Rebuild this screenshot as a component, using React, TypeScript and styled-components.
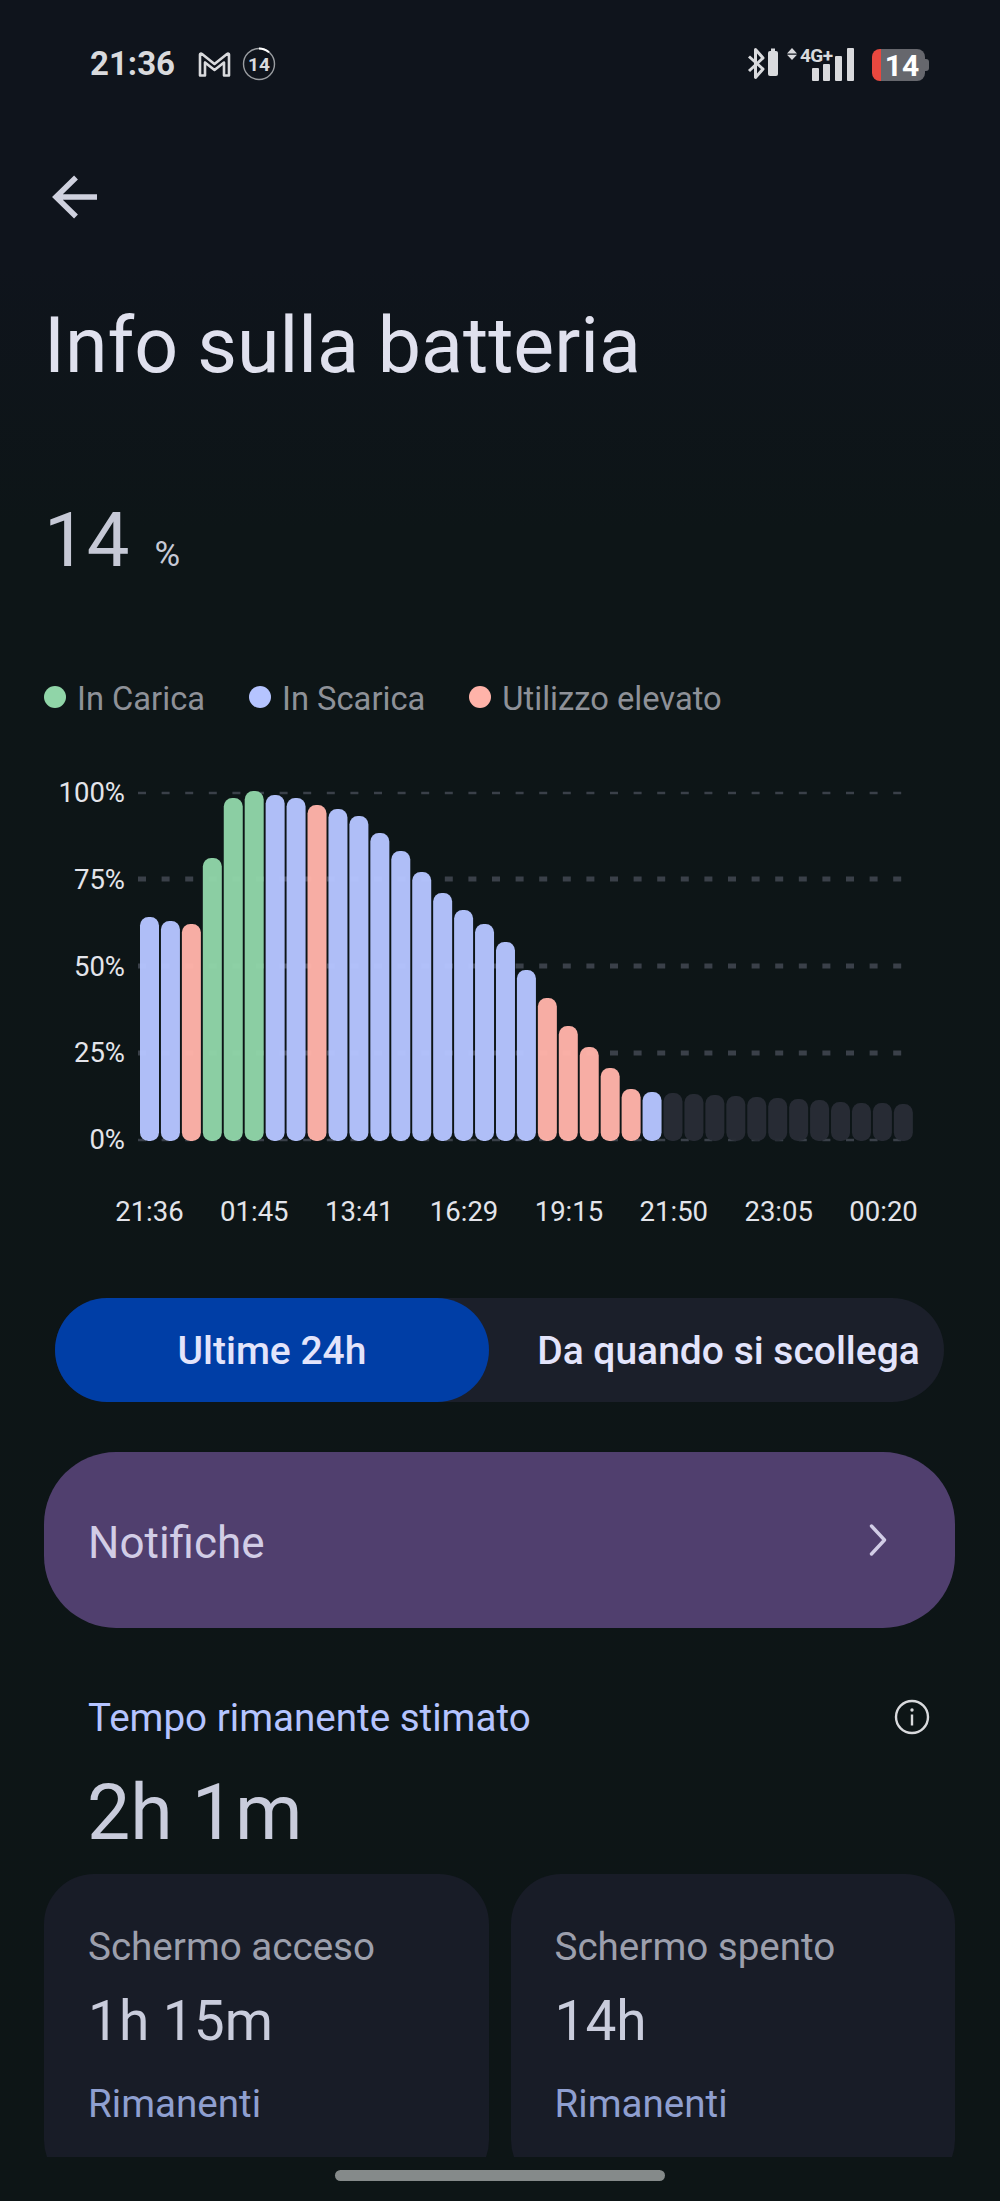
import React from 'react';
import styled, { createGlobalStyle } from 'styled-components';

const GlobalStyle = createGlobalStyle`
  html, body {
    margin: 0;
    padding: 0;
    background: #0d1516;
  }
  * {
    box-sizing: border-box;
  }
`;

const BLUE = '#b5c4ff';
const GREEN = '#90d5a8';
const SALMON = '#ffb3a9';
const IDLE = '#282c36';

const CHART_TOP = 778;
const CHART_LEFT = 130;
const BASELINE = 1141;

type Bar = { top: number; color: string };

const bars: Bar[] = [
  { top: 917, color: BLUE },
  { top: 921, color: BLUE },
  { top: 924, color: SALMON },
  { top: 858, color: GREEN },
  { top: 798, color: GREEN },
  { top: 791, color: GREEN },
  { top: 795, color: BLUE },
  { top: 798, color: BLUE },
  { top: 805, color: SALMON },
  { top: 809, color: BLUE },
  { top: 816, color: BLUE },
  { top: 833, color: BLUE },
  { top: 851, color: BLUE },
  { top: 872, color: BLUE },
  { top: 893, color: BLUE },
  { top: 910, color: BLUE },
  { top: 924, color: BLUE },
  { top: 942, color: BLUE },
  { top: 970, color: BLUE },
  { top: 998, color: SALMON },
  { top: 1026, color: SALMON },
  { top: 1047, color: SALMON },
  { top: 1068, color: SALMON },
  { top: 1089, color: SALMON },
  { top: 1092, color: BLUE },
  ...[1093, 1094, 1095, 1096, 1097, 1098, 1099, 1100, 1102, 1103, 1103, 1104].map((top) => ({ top, color: IDLE })),
];

const gridLines = [
  { y: 793, h: 2.5 },
  { y: 879, h: 5 },
  { y: 966, h: 5 },
  { y: 1053, h: 5 },
  { y: 1140, h: 2.5 },
];

const Page = styled.div`
  width: 1000px;
  height: 2201px;
  overflow: hidden;
  font-family: Roboto, 'Noto Sans', sans-serif;
  background: linear-gradient(180deg, #0f141c 0%, #0f141c 12%, #0d1517 24%, #0d1516 100%);
`;

const StatusBar = styled.div`
  height: 130px;
  padding: 0 75px 3px 90px;
  display: flex;
  align-items: center;
  color: #d9dadd;
`;

const Clock = styled.span`
  font-size: 33px;
  font-weight: 700;
  width: 108px;
`;

const StatusSpacer = styled.div`
  flex: 1;
`;

const BatteryPill = styled.div`
  position: relative;
  width: 53px;
  height: 32px;
  margin: 3px 0 0 15px;
  border-radius: 8px;
  background: linear-gradient(90deg, #e8483f 0, #e8483f 9px, #66676d 9px);
  display: flex;
  align-items: center;
  justify-content: center;
  padding-left: 7px;
  font-size: 30px;
  font-weight: 700;
  color: #fff;

  &::after {
    content: '';
    position: absolute;
    left: 100%;
    top: 10px;
    width: 4px;
    height: 12px;
    border-radius: 0 3px 3px 0;
    background: #66676d;
  }
`;

const BackRow = styled.div`
  height: 134px;
  padding-left: 52px;
  display: flex;
  align-items: center;
`;

const Title = styled.h1`
  margin: 34px 0 0;
  padding-left: 44px;
  height: 96px;
  font-size: 77px;
  line-height: 96px;
  font-weight: 400;
  color: #e0e1ee;
`;

const LevelRow = styled.div`
  margin-top: 104px;
  padding-left: 44px;
  height: 84px;
  display: flex;
  align-items: baseline;
  color: #c6c9d6;
`;

const LevelValue = styled.span`
  font-size: 76px;
  line-height: 84px;
  font-weight: 400;
`;

const LevelUnit = styled.span`
  margin-left: 25px;
  font-size: 35px;
  font-weight: 400;
`;

const Legend = styled.div`
  margin-top: 97px;
  padding-left: 44px;
  height: 40px;
  display: flex;
  align-items: center;
  gap: 44px;
`;

const LegendItem = styled.div`
  display: flex;
  align-items: center;
  gap: 11px;
  font-size: 32.7px;
  color: #8e9198;
`;

const LegendDot = styled.span<{ $color: string }>`
  width: 22px;
  height: 22px;
  margin-top: -4px;
  border-radius: 50%;
  background: ${(p) => p.$color};
`;

const ChartRow = styled.div`
  margin-top: 59px;
  display: flex;
`;

const YAxis = styled.div`
  width: 125px;
  height: 377px;
  display: flex;
  flex-direction: column;
  justify-content: space-between;
  align-items: flex-end;
  margin-right: 5px;
`;

const AxisLabel = styled.span`
  font-size: 27.5px;
  line-height: 30px;
  color: #e3e4ea;
`;

const XAxis = styled.div`
  margin-top: 40px;
  margin-left: 97px;
  width: 839px;
  display: grid;
  grid-template-columns: repeat(8, 1fr);
  justify-items: center;
`;

const XLabel = styled.span`
  font-size: 27.5px;
  line-height: 34px;
  color: #e3e4ea;
`;

const Toggle = styled.div`
  margin: 69px 0 0 55px;
  width: 889px;
  height: 104px;
  border-radius: 52px;
  background: #1b1f2a;
  display: grid;
  grid-template-columns: 434px 1fr;
  font-size: 39px;
  font-weight: 500;
  color: #e3e4fb;
`;

const ToggleOption = styled.div<{ $active?: boolean }>`
  display: flex;
  align-items: center;
  justify-content: center;
  border-radius: 52px;
  background: ${(p) => (p.$active ? '#003ea6' : 'transparent')};
  padding: ${(p) => (p.$active ? '2px 0 0' : '2px 0 0 24px')};
  white-space: nowrap;
`;

const NotifyCard = styled.div`
  margin: 50px 45px 0 44px;
  height: 176px;
  border-radius: 72px;
  background: #503f6e;
  padding: 0 68px 0 44px;
  display: flex;
  align-items: center;
  justify-content: space-between;
  font-size: 44px;
  color: #d2cde6;
`;

const NotifyLabel = styled.span`
  padding-top: 5px;
`;

const EstimateHead = styled.div`
  margin-top: 69px;
  padding: 0 70px 0 88px;
  height: 40px;
  display: flex;
  align-items: center;
  justify-content: space-between;
  font-size: 38.6px;
  color: ${BLUE};
`;

const EstimateValue = styled.div`
  margin-top: 36px;
  padding-left: 87px;
  height: 80px;
  font-size: 77px;
  line-height: 80px;
  font-weight: 400;
  color: #c9ccdc;
`;

const CardsClip = styled.div`
  margin: 21px 45px 0 44px;
  height: 283px;
  overflow: hidden;
  display: grid;
  grid-template-columns: 1fr 1fr;
  gap: 22px;
`;

const StatCard = styled.div`
  height: 316px;
  border-radius: 50px;
  background: #181c27;
  padding: 52px 44px 0;
`;

const StatLabel = styled.div`
  font-size: 38.6px;
  line-height: 42px;
  color: #9c9fac;
`;

const StatValue = styled.div`
  margin-top: 20px;
  font-size: 55px;
  line-height: 66px;
  font-weight: 400;
  color: #c9ccdc;
`;

const StatNote = styled.div`
  margin-top: 29px;
  font-size: 38.6px;
  line-height: 42px;
  color: #8f9fd0;
`;

const HomeBar = styled.div`
  margin: 13px auto 0;
  width: 330px;
  height: 11px;
  border-radius: 6px;
  background: #858a8a;
`;

const GmailIcon = () => (
  <svg width="33" height="26" viewBox="0 0 33 26" fill="none">
    <path
      d="M2 24.5V3.5C2 2.6 3 2.2 3.7 2.8L16.5 13L29.3 2.8C30 2.2 31 2.6 31 3.5V24.5H26V11.5L16.5 19L7 11.5V24.5Z"
      stroke="#d9dadd"
      strokeWidth="2.6"
      strokeLinejoin="round"
    />
  </svg>
);

const BadgeIcon = () => (
  <svg width="34" height="34" viewBox="0 0 34 34" style={{ marginLeft: 11 }}>
    <circle cx="17" cy="17" r="15.5" fill="none" stroke="#9a9da1" strokeWidth="1.4" />
    <path d="M17 1.5A15.5 15.5 0 0 1 27 5.2" fill="none" stroke="#fff" strokeWidth="2" />
    <text x="17" y="24" textAnchor="middle" fontFamily="Roboto" fontWeight="700" fontSize="19" fill="#d9dadd">
      14
    </text>
  </svg>
);

const ConnectivityIcons = () => (
  <svg width="112" height="40" viewBox="0 0 112 40">
    <path
      d="M4 12.5L18 25L10.5 33.5V5.5L18 14L4 27"
      fill="none"
      stroke="#d9dadd"
      strokeWidth="3"
      strokeLinejoin="round"
    />
    <rect x="23" y="7" width="10" height="25" rx="2" fill="#d9dadd" />
    <rect x="26" y="4.5" width="4" height="3" fill="#d9dadd" />
    <path d="M47 4L52 9.5H42ZM47 16L52 10.8H42Z" fill="#d9dadd" />
    <text x="55" y="18" fontFamily="Roboto" fontWeight="700" fontSize="19" fill="#d9dadd" textLength="33">
      4G+
    </text>
    <rect x="67" y="24" width="7" height="13" rx="1" fill="#d9dadd" />
    <rect x="78" y="20" width="7" height="17" rx="1" fill="#d9dadd" />
    <rect x="90" y="12" width="7" height="25" rx="1" fill="#d9dadd" />
    <rect x="102" y="4" width="7" height="33" rx="1" fill="#d9dadd" />
  </svg>
);

const BackIcon = () => (
  <svg width="46" height="46" viewBox="0 0 46 46" fill="none">
    <path d="M45 23H5M24 3.5L4 23L24 42.5" stroke="#cfd1de" strokeWidth="5.5" />
  </svg>
);

const ChevronIcon = () => (
  <svg width="18" height="32" viewBox="0 0 18 32" fill="none">
    <path d="M2.5 2L15.5 16L2.5 30" stroke="#d2cde6" strokeWidth="3.4" strokeLinecap="round" strokeLinejoin="round" />
  </svg>
);

const InfoIcon = () => (
  <svg width="36" height="36" viewBox="0 0 36 36" fill="none" style={{ marginTop: -1 }}>
    <circle cx="18" cy="18" r="16" stroke="#d9dadd" strokeWidth="2.4" />
    <rect x="16.8" y="15.5" width="2.4" height="11" fill="#d9dadd" />
    <circle cx="18" cy="11" r="1.7" fill="#d9dadd" />
  </svg>
);

const BatteryChart = () => (
  <svg width="800" height="377" viewBox="0 0 800 377">
    {gridLines.map((line) =>
      Array.from({ length: 33 }, (_, i) => (
        <rect
          key={`${line.y}-${i}`}
          x={138 - CHART_LEFT + i * 23.6}
          y={line.y - CHART_TOP - line.h / 2}
          width={8}
          height={line.h}
          fill="#3a4049"
        />
      ))
    )}
    {bars.map((bar, i) => (
      <rect
        key={i}
        x={140 - CHART_LEFT + i * 20.94}
        y={bar.top - CHART_TOP}
        width={19}
        height={BASELINE - bar.top}
        rx={8.5}
        fill={bar.color}
        fillOpacity={0.97}
      />
    ))}
  </svg>
);

export default function App() {
  return (
    <Page>
      <GlobalStyle />
      <StatusBar>
        <Clock>21:36</Clock>
        <GmailIcon />
        <BadgeIcon />
        <StatusSpacer />
        <ConnectivityIcons />
        <BatteryPill>14</BatteryPill>
      </StatusBar>
      <BackRow>
        <BackIcon />
      </BackRow>
      <Title>Info sulla batteria</Title>
      <LevelRow>
        <LevelValue>14</LevelValue>
        <LevelUnit>%</LevelUnit>
      </LevelRow>
      <Legend>
        <LegendItem>
          <LegendDot $color={GREEN} />
          In Carica
        </LegendItem>
        <LegendItem>
          <LegendDot $color={BLUE} />
          In Scarica
        </LegendItem>
        <LegendItem>
          <LegendDot $color={SALMON} />
          Utilizzo elevato
        </LegendItem>
      </Legend>
      <ChartRow>
        <YAxis>
          {['100%', '75%', '50%', '25%', '0%'].map((label) => (
            <AxisLabel key={label}>{label}</AxisLabel>
          ))}
        </YAxis>
        <BatteryChart />
      </ChartRow>
      <XAxis>
        {['21:36', '01:45', '13:41', '16:29', '19:15', '21:50', '23:05', '00:20'].map((label) => (
          <XLabel key={label}>{label}</XLabel>
        ))}
      </XAxis>
      <Toggle>
        <ToggleOption $active>Ultime 24h</ToggleOption>
        <ToggleOption>Da quando si scollega</ToggleOption>
      </Toggle>
      <NotifyCard>
        <NotifyLabel>Notifiche</NotifyLabel>
        <ChevronIcon />
      </NotifyCard>
      <EstimateHead>
        Tempo rimanente stimato
        <InfoIcon />
      </EstimateHead>
      <EstimateValue>2h 1m</EstimateValue>
      <CardsClip>
        <StatCard>
          <StatLabel>Schermo acceso</StatLabel>
          <StatValue>1h 15m</StatValue>
          <StatNote>Rimanenti</StatNote>
        </StatCard>
        <StatCard>
          <StatLabel>Schermo spento</StatLabel>
          <StatValue>14h</StatValue>
          <StatNote>Rimanenti</StatNote>
        </StatCard>
      </CardsClip>
      <HomeBar />
    </Page>
  );
}
